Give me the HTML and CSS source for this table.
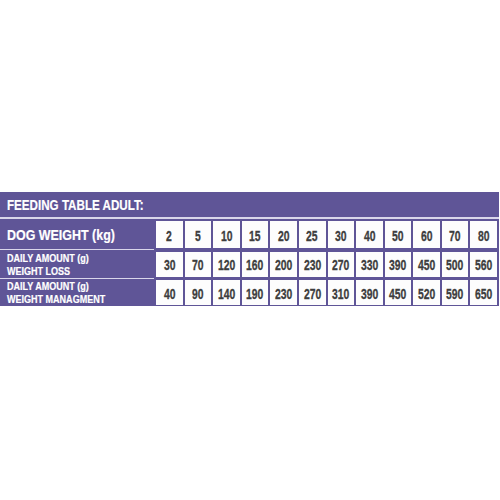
FILE: index.html
```html
<!DOCTYPE html>
<html>
<head>
<meta charset="utf-8">
<link rel="stylesheet" href="styles.css">
</head>
<body>
<div class="feed">
  <div class="title"><span class="sq">FEEDING TABLE ADULT:</span></div>
  <div class="rule"></div>
  <div class="row r1">
    <div class="label big"><span class="sq">DOG WEIGHT (kg)</span></div>
    <div class="cell"><span class="num">2</span></div><div class="cell"><span class="num">5</span></div><div class="cell"><span class="num">10</span></div><div class="cell"><span class="num">15</span></div>
    <div class="cell"><span class="num">20</span></div><div class="cell"><span class="num">25</span></div><div class="cell"><span class="num">30</span></div><div class="cell"><span class="num">40</span></div>
    <div class="cell"><span class="num">50</span></div><div class="cell"><span class="num">60</span></div><div class="cell"><span class="num">70</span></div><div class="cell"><span class="num">80</span></div>
  </div>
  <div class="row r2">
    <div class="label small"><span class="sq">DAILY AMOUNT (g)</span><span class="sq">WEIGHT LOSS</span></div>
    <div class="cell"><span class="num">30</span></div><div class="cell"><span class="num">70</span></div><div class="cell"><span class="num">120</span></div><div class="cell"><span class="num">160</span></div>
    <div class="cell"><span class="num">200</span></div><div class="cell"><span class="num">230</span></div><div class="cell"><span class="num">270</span></div><div class="cell"><span class="num">330</span></div>
    <div class="cell"><span class="num">390</span></div><div class="cell"><span class="num">450</span></div><div class="cell"><span class="num">500</span></div><div class="cell"><span class="num">560</span></div>
  </div>
  <div class="row r3">
    <div class="label small"><span class="sq">DAILY AMOUNT (g)</span><span class="sq">WEIGHT MANAGMENT</span></div>
    <div class="cell"><span class="num">40</span></div><div class="cell"><span class="num">90</span></div><div class="cell"><span class="num">140</span></div><div class="cell"><span class="num">190</span></div>
    <div class="cell"><span class="num">230</span></div><div class="cell"><span class="num">270</span></div><div class="cell"><span class="num">310</span></div><div class="cell"><span class="num">390</span></div>
    <div class="cell"><span class="num">450</span></div><div class="cell"><span class="num">520</span></div><div class="cell"><span class="num">590</span></div><div class="cell"><span class="num">650</span></div>
  </div>
</div>
</body>
</html>
```
FILE: styles.css
```css
html, body {
  margin: 0;
  padding: 0;
  background: #ffffff;
}
body {
  width: 500px;
  height: 500px;
  font-family: "Liberation Sans", Arial, sans-serif;
  font-weight: bold;
}
.feed {
  margin-top: 192px;
  width: 499px;
  background: #5f5597;
}
.sq {
  display: block;
  white-space: nowrap;
  transform-origin: left center;
  -webkit-text-stroke: 0.2px #ffffff;
}
.title {
  height: 25px;
  line-height: 26px;
  padding-left: 7px;
  color: #ffffff;
  font-size: 14px;
}
.title .sq { transform: scaleX(0.83); }
.rule {
  height: 2px;
  background: #d9d6ea;
}
.row {
  display: grid;
  grid-template-columns: 154px repeat(12, minmax(0, 1fr));
  column-gap: 2px;
  padding-right: 2px;
}
.r1 { height: 31px; }
.r2 { height: 29px; }
.r3 { height: 27px; }
.label {
  color: #ffffff;
  padding-left: 7px;
  display: flex;
  flex-direction: column;
  justify-content: center;
}
.r1 .label, .r2 .label {
  border-bottom: 1px solid #d9d6ea;
}
.big {
  font-size: 15px;
}
.big .sq { transform: scaleX(0.83); }
.small {
  font-size: 11px;
  line-height: 13px;
}
.small .sq { transform: scaleX(0.82); }
.r2 .label { padding-top: 1px; }
.cell {
  background: #fdfdfd;
  color: #3d3d3d;
  font-size: 14px;
  display: flex;
  align-items: center;
  justify-content: center;
  padding-top: 2px;
}
.num {
  display: inline-block;
  white-space: nowrap;
  transform: scaleX(0.74);
  transform-origin: center;
  -webkit-text-stroke: 0.3px #3d3d3d;
}
.r1 .cell { margin: 2px 0 2px; }
.r2 .cell { margin: 1.5px 0 2px; }
.r3 .cell { margin: 1px 0 1px; }
```
